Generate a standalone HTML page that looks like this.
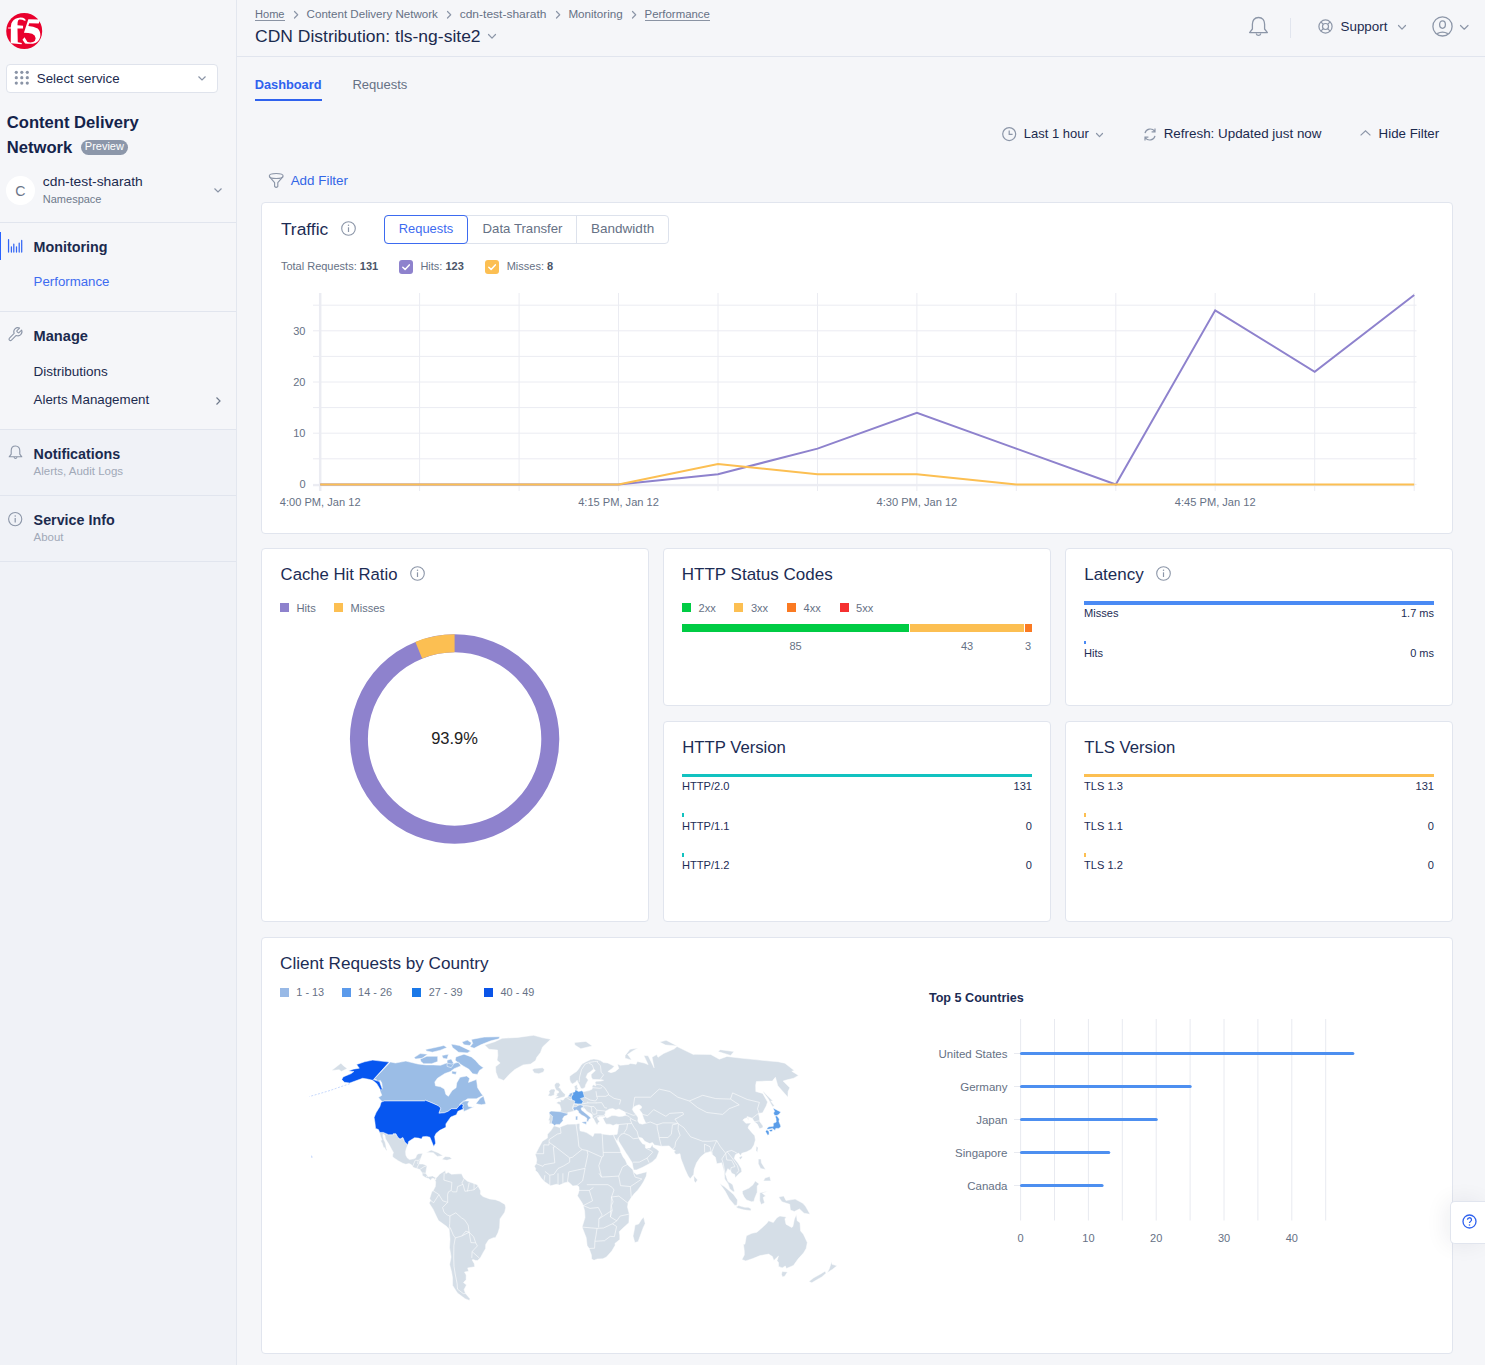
<!DOCTYPE html><html><head><meta charset="utf-8"><style>
html,body{margin:0;padding:0;width:1485px;height:1365px;overflow:hidden;}
body{width:1485px;height:1365px;position:relative;overflow:hidden;background:#f5f6f9;font-family:"Liberation Sans",sans-serif;}
.t{position:absolute;white-space:pre;line-height:1;}
svg{overflow:visible;}
</style></head><body>
<div style="position:absolute;left:0px;top:0px;width:236px;height:429px;background:#f5f6f9"></div>
<div style="position:absolute;left:0px;top:429px;width:236px;height:936px;background:#f0f2f7"></div>
<div style="position:absolute;left:236px;top:0px;width:1px;height:1365px;background:#e3e7ef"></div>
<svg style="position:absolute;left:4px;top:11px;" width="40" height="40" viewBox="0 0 40 40"><circle cx="20.2" cy="20" r="18" fill="#e9002d"/><g transform="scale(0.029304)" fill="#fff"><path d="M140 560 L230 560 L250 430 Q300 280 470 235 Q620 200 720 270 L745 325 L700 335 Q620 285 520 292 Q470 310 465 380 L460 490 L650 500 L650 600 L460 600 L470 1070 L610 1095 L600 1135 L230 1100 L235 600 L140 600 Z"/><path d="M830 285 L1190 290 L1215 345 L1185 430 L860 420 L830 510 Q1000 520 1150 600 Q1250 700 1240 850 Q1220 1000 1090 1080 Q950 1140 720 1110 L630 980 L700 900 L800 1060 Q900 1090 990 1060 Q1080 1020 1080 930 Q1070 830 960 780 Q840 740 680 740 Z"/></g></svg>
<div style="position:absolute;left:6px;top:64px;width:210px;height:27px;background:#fff;border:1px solid #dfe3ec;border-radius:4px"></div>
<svg style="position:absolute;left:15px;top:71px;" width="14" height="14" viewBox="0 0 14 14"><circle cx="1.3" cy="1.3" r="1.6" fill="#8a94a6"/><circle cx="1.3" cy="6.7" r="1.6" fill="#8a94a6"/><circle cx="1.3" cy="12.1" r="1.6" fill="#8a94a6"/><circle cx="6.8" cy="1.3" r="1.6" fill="#8a94a6"/><circle cx="6.8" cy="6.7" r="1.6" fill="#8a94a6"/><circle cx="6.8" cy="12.1" r="1.6" fill="#8a94a6"/><circle cx="12.3" cy="1.3" r="1.6" fill="#8a94a6"/><circle cx="12.3" cy="6.7" r="1.6" fill="#8a94a6"/><circle cx="12.3" cy="12.1" r="1.6" fill="#8a94a6"/></svg>
<svg style="position:absolute;left:198px;top:76px;" width="8" height="5" viewBox="0 0 8 5"><path d="M0.5 0.5 L4 4 L7.5 0.5" fill="none" stroke="#8a94a6" stroke-width="1.2"/></svg>
<div style="position:absolute;left:80.8px;top:139.7px;width:47.2px;height:15.1px;background:#8c97aa;border-radius:8px"></div>
<div style="position:absolute;left:6px;top:176px;width:29px;height:29px;background:#fff;border-radius:50%"></div>
<svg style="position:absolute;left:214px;top:188px;" width="8" height="5" viewBox="0 0 8 5"><path d="M0.5 0.5 L4 4 L7.5 0.5" fill="none" stroke="#8a94a6" stroke-width="1.2"/></svg>
<div style="position:absolute;left:0px;top:222px;width:236px;height:1px;background:#e1e5ee"></div>
<div style="position:absolute;left:0px;top:311px;width:236px;height:1px;background:#e1e5ee"></div>
<div style="position:absolute;left:0px;top:429px;width:236px;height:1px;background:#e1e5ee"></div>
<div style="position:absolute;left:0px;top:495px;width:236px;height:1px;background:#e1e5ee"></div>
<div style="position:absolute;left:0px;top:561px;width:236px;height:1px;background:#e1e5ee"></div>
<div style="position:absolute;left:0px;top:232px;width:1px;height:28px;background:#2962ff"></div>
<svg style="position:absolute;left:0px;top:0px;" width="30" height="260" viewBox="0 0 30 260"><path d="M8.55 239.70 V252.0 M11.40 246.80 V252.0 M13.80 244.00 V252.0 M16.50 246.80 V252.0 M19.20 243.00 V252.0 M21.70 240.40 V252.0" stroke="#3366f5" stroke-width="1.25" stroke-linecap="round" fill="none"/></svg>
<svg style="position:absolute;left:0px;top:0px;" width="30" height="345" viewBox="0 0 30 345"><g transform="translate(7 326.3) scale(0.68)"><path d="M14.7 6.3a1 1 0 0 0 0 1.4l1.6 1.6a1 1 0 0 0 1.4 0l3.77-3.77a6 6 0 0 1-7.94 7.94l-6.91 6.91a2.12 2.12 0 0 1-3-3l6.91-6.91a6 6 0 0 1 7.94-7.94l-3.76 3.76z" fill="none" stroke="#8c96a8" stroke-width="1.6" stroke-linejoin="round"/></g></svg>
<svg style="position:absolute;left:216px;top:397px;" width="5" height="8" viewBox="0 0 5 8"><path d="M0.5 0.5 L4 4 L0.5 7.5" fill="none" stroke="#6f7a8c" stroke-width="1.2"/></svg>
<svg style="position:absolute;left:8px;top:445px;" width="15" height="15" viewBox="0 0 15 15"><path d="M7.5 1 C4.6 1 3.2 3.2 3.2 5.8 V9.2 L1.2 11.8 H13.8 L11.8 9.2 V5.8 C11.8 3.2 10.4 1 7.5 1 Z M6 12.4 a1.6 1.6 0 0 0 3 0" fill="none" stroke="#8c96a8" stroke-width="1.1" stroke-linejoin="round"/></svg>
<svg style="position:absolute;left:8px;top:511.5px;" width="15" height="15" viewBox="0 0 15 15"><circle cx="7.2" cy="7.1" r="6.6" fill="none" stroke="#8c96a8" stroke-width="1.1"/><path d="M7.2 6 V10.5" stroke="#8c96a8" stroke-width="1.2"/><circle cx="7.2" cy="4" r="0.75" fill="#8c96a8"/></svg>
<div style="position:absolute;left:237px;top:56px;width:1248px;height:1px;background:#e1e5ee"></div>
<div style="position:absolute;left:255px;top:20px;width:29.5px;height:1px;background:#8a93a3"></div>
<svg style="position:absolute;left:294px;top:10.5px;" width="4.5" height="7.5" viewBox="0 0 4.5 7.5"><path d="M0.5 0.5 L3.7 3.75 L0.5 7.0" fill="none" stroke="#8c96a8" stroke-width="1.2" stroke-linecap="round" stroke-linejoin="round"/></svg>
<svg style="position:absolute;left:447px;top:10.5px;" width="4.5" height="7.5" viewBox="0 0 4.5 7.5"><path d="M0.5 0.5 L3.7 3.75 L0.5 7.0" fill="none" stroke="#8c96a8" stroke-width="1.2" stroke-linecap="round" stroke-linejoin="round"/></svg>
<svg style="position:absolute;left:555.5px;top:10.5px;" width="4.5" height="7.5" viewBox="0 0 4.5 7.5"><path d="M0.5 0.5 L3.7 3.75 L0.5 7.0" fill="none" stroke="#8c96a8" stroke-width="1.2" stroke-linecap="round" stroke-linejoin="round"/></svg>
<svg style="position:absolute;left:632px;top:10.5px;" width="4.5" height="7.5" viewBox="0 0 4.5 7.5"><path d="M0.5 0.5 L3.7 3.75 L0.5 7.0" fill="none" stroke="#8c96a8" stroke-width="1.2" stroke-linecap="round" stroke-linejoin="round"/></svg>
<div style="position:absolute;left:644.6px;top:20px;width:65.3px;height:1px;background:#8a93a3"></div>
<svg style="position:absolute;left:488px;top:34px;" width="8" height="5" viewBox="0 0 8 5"><path d="M0.5 0.5 L4.0 4.2 L7.5 0.5" fill="none" stroke="#8c96a8" stroke-width="1.2" stroke-linecap="round" stroke-linejoin="round"/></svg>
<svg style="position:absolute;left:1248px;top:16px;" width="21" height="22" viewBox="0 0 21 22"><path d="M10.5 1.5 C6.4 1.5 4.4 4.6 4.4 8.2 V13 L1.6 16.6 H19.4 L16.6 13 V8.2 C16.6 4.6 14.6 1.5 10.5 1.5 Z M8.2 17.6 a2.4 2.4 0 0 0 4.6 0" fill="none" stroke="#8c96a8" stroke-width="1.3" stroke-linejoin="round"/></svg>
<div style="position:absolute;left:1290px;top:18px;width:1px;height:20px;background:#e1e5ee"></div>
<svg style="position:absolute;left:1318px;top:19px;" width="15" height="15" viewBox="0 0 15 15"><circle cx="7.5" cy="7.5" r="6.6" fill="none" stroke="#8c96a8" stroke-width="1.2"/><circle cx="7.5" cy="7.5" r="3" fill="none" stroke="#8c96a8" stroke-width="1.2"/><path d="M2.8 2.8 L5.4 5.4 M12.2 2.8 L9.6 5.4 M2.8 12.2 L5.4 9.6 M12.2 12.2 L9.6 9.6" stroke="#8c96a8" stroke-width="1.2"/></svg>
<svg style="position:absolute;left:1398px;top:25px;" width="8" height="5" viewBox="0 0 8 5"><path d="M0.5 0.5 L4.0 4.2 L7.5 0.5" fill="none" stroke="#8c96a8" stroke-width="1.2" stroke-linecap="round" stroke-linejoin="round"/></svg>
<svg style="position:absolute;left:1432px;top:16px;" width="21" height="21" viewBox="0 0 21 21"><circle cx="10.5" cy="10.4" r="9.6" fill="none" stroke="#8c96a8" stroke-width="1.3"/><ellipse cx="10.5" cy="8.6" rx="2.9" ry="3.7" fill="none" stroke="#8c96a8" stroke-width="1.3"/><path d="M5.2 17.6 Q10.5 14.6 15.8 17.6" fill="none" stroke="#8c96a8" stroke-width="1.3"/></svg>
<svg style="position:absolute;left:1460px;top:25px;" width="8.5" height="5" viewBox="0 0 8.5 5"><path d="M0.5 0.5 L4.25 4.2 L8.0 0.5" fill="none" stroke="#8c96a8" stroke-width="1.2" stroke-linecap="round" stroke-linejoin="round"/></svg>
<div style="position:absolute;left:255px;top:99px;width:67px;height:2px;background:#2f62ee"></div>
<svg style="position:absolute;left:1001.5px;top:126.5px;" width="15" height="15" viewBox="0 0 15 15"><circle cx="7.2" cy="7.1" r="6.5" fill="none" stroke="#8c96a8" stroke-width="1.2"/><path d="M7.2 3.4 V7.3 H10.6" fill="none" stroke="#8c96a8" stroke-width="1.2"/></svg>
<svg style="position:absolute;left:1096px;top:133px;" width="7" height="4.5" viewBox="0 0 7 4.5"><path d="M0.5 0.5 L3.5 3.7 L6.5 0.5" fill="none" stroke="#8c96a8" stroke-width="1.2" stroke-linecap="round" stroke-linejoin="round"/></svg>
<svg style="position:absolute;left:1142.5px;top:126.5px;" width="14" height="15" viewBox="0 0 14 15"><path d="M2 6.2 A5.4 5.4 0 0 1 11.6 4.2 M12 1.4 V4.8 H8.6 M12 8.8 A5.4 5.4 0 0 1 2.4 10.8 M2 13.6 V10.2 H5.4" fill="none" stroke="#8c96a8" stroke-width="1.2"/></svg>
<svg style="position:absolute;left:1360px;top:129.5px;" width="11" height="6" viewBox="0 0 11 6"><path d="M0.6 5.4 L5.5 0.8 L10.4 5.4" fill="none" stroke="#8c96a8" stroke-width="1.2"/></svg>
<svg style="position:absolute;left:0px;top:0px;" width="300" height="200" viewBox="0 0 300 200"><ellipse cx="276.2" cy="176" rx="6.9" ry="2.5" fill="none" stroke="#8c96a8" stroke-width="1.15"/><path d="M269.4 176.6 L274.6 182.6 V186.4 Q276.2 188.4 277.8 186.4 V182.6 L283 176.6" fill="none" stroke="#8c96a8" stroke-width="1.15" stroke-linejoin="round"/></svg>
<div style="position:absolute;left:261px;top:202px;width:1190px;height:330px;background:#fff;border:1px solid #e1e5ee;border-radius:4px"></div>
<svg style="position:absolute;left:340.5px;top:221.0px;" width="15" height="15" viewBox="0 0 15 15"><circle cx="7.5" cy="7.5" r="6.8" fill="none" stroke="#8c96a8" stroke-width="1.1"/><path d="M7.5 6.3 V11" stroke="#8c96a8" stroke-width="1.2"/><circle cx="7.5" cy="4.2" r="0.75" fill="#8c96a8"/></svg>
<div style="position:absolute;left:384px;top:215px;width:283px;height:27px;background:#fff;border:1px solid #dde2ec;border-radius:4px"></div>
<div style="position:absolute;left:576px;top:216px;width:1px;height:27px;background:#dde2ec"></div>
<div style="position:absolute;left:384px;top:215px;width:82px;height:27px;border:1px solid #3d6bf0;border-radius:4px"></div>
<svg style="position:absolute;left:399px;top:260px;" width="14" height="14" viewBox="0 0 14 14"><rect x="0" y="0" width="14" height="14" rx="3" fill="#8e82cd"/><path d="M3.8 7.2 L6.1 9.4 L10.3 4.9" fill="none" stroke="#fff" stroke-width="1.5" stroke-linecap="round" stroke-linejoin="round"/></svg>
<svg style="position:absolute;left:485px;top:260px;" width="14" height="14" viewBox="0 0 14 14"><rect x="0" y="0" width="14" height="14" rx="3" fill="#fcbf52"/><path d="M3.8 7.2 L6.1 9.4 L10.3 4.9" fill="none" stroke="#fff" stroke-width="1.5" stroke-linecap="round" stroke-linejoin="round"/></svg>
<svg style="position:absolute;left:0px;top:0px;" width="1485" height="1365" viewBox="0 0 1485 1365"><path d="M313 484.4 H1416.5" stroke="#ebecf2" stroke-width="1"/><path d="M313 458.8 H1416.5" stroke="#ebecf2" stroke-width="1"/><path d="M313 433.2 H1416.5" stroke="#ebecf2" stroke-width="1"/><path d="M313 407.6 H1416.5" stroke="#ebecf2" stroke-width="1"/><path d="M313 382.0 H1416.5" stroke="#ebecf2" stroke-width="1"/><path d="M313 356.4 H1416.5" stroke="#ebecf2" stroke-width="1"/><path d="M313 330.8 H1416.5" stroke="#ebecf2" stroke-width="1"/><path d="M313 305.2 H1416.5" stroke="#ebecf2" stroke-width="1"/><path d="M419.6 293 V491" stroke="#ebecf2" stroke-width="1"/><path d="M519.1 293 V491" stroke="#ebecf2" stroke-width="1"/><path d="M618.5 293 V491" stroke="#ebecf2" stroke-width="1"/><path d="M718.0 293 V491" stroke="#ebecf2" stroke-width="1"/><path d="M817.5 293 V491" stroke="#ebecf2" stroke-width="1"/><path d="M916.9 293 V491" stroke="#ebecf2" stroke-width="1"/><path d="M1016.3 293 V491" stroke="#ebecf2" stroke-width="1"/><path d="M1115.8 293 V491" stroke="#ebecf2" stroke-width="1"/><path d="M1215.2 293 V491" stroke="#ebecf2" stroke-width="1"/><path d="M1314.7 293 V491" stroke="#ebecf2" stroke-width="1"/><path d="M1414.2 293 V491" stroke="#ebecf2" stroke-width="1"/><path d="M320.2 293 V491" stroke="#ebecf2" stroke-width="2.5"/><path d="M313 485.5 H1414.5" stroke="#ebecf2" stroke-width="1.5"/><polyline points="320.2,484.4 419.6,484.4 519.1,484.4 618.5,484.4 718.0,474.2 817.5,448.6 916.9,412.7 1016.3,448.6 1115.8,484.4 1215.2,310.3 1314.7,371.8 1414.2,295.0" fill="none" stroke="#8e82cd" stroke-width="2" stroke-linejoin="miter"/><polyline points="320.2,484.4 419.6,484.4 519.1,484.4 618.5,484.4 718.0,463.9 817.5,474.2 916.9,474.2 1016.3,484.4 1115.8,484.4 1215.2,484.4 1314.7,484.4 1414.2,484.4" fill="none" stroke="#fcbf52" stroke-width="2"/></svg>
<div style="position:absolute;left:261px;top:548px;width:386px;height:372px;background:#fff;border:1px solid #e1e5ee;border-radius:4px"></div>
<svg style="position:absolute;left:410.0px;top:566.0px;" width="15" height="15" viewBox="0 0 15 15"><circle cx="7.5" cy="7.5" r="6.8" fill="none" stroke="#8c96a8" stroke-width="1.1"/><path d="M7.5 6.3 V11" stroke="#8c96a8" stroke-width="1.2"/><circle cx="7.5" cy="4.2" r="0.75" fill="#8c96a8"/></svg>
<div style="position:absolute;left:280px;top:603px;width:9px;height:9px;background:#8e82cd"></div>
<div style="position:absolute;left:334px;top:603px;width:9px;height:9px;background:#fcbf52"></div>
<svg style="position:absolute;left:0px;top:0px;" width="1485" height="1365" viewBox="0 0 1485 1365"><circle cx="454.6" cy="739" r="95.7" fill="none" stroke="#8e82cd" stroke-width="18.0"/><path d="M454.6 643.3 A95.7 95.7 0 0 0 418.77 650.26" fill="none" stroke="#fcbf52" stroke-width="18.0"/></svg>
<div style="position:absolute;left:663px;top:548px;width:386px;height:156px;background:#fff;border:1px solid #e1e5ee;border-radius:4px"></div>
<div style="position:absolute;left:681.8px;top:603px;width:9px;height:9px;background:#00cc44"></div>
<div style="position:absolute;left:734.2px;top:603px;width:9px;height:9px;background:#fcbf52"></div>
<div style="position:absolute;left:787px;top:603px;width:9px;height:9px;background:#fa7a22"></div>
<div style="position:absolute;left:840px;top:603px;width:9px;height:9px;background:#f53030"></div>
<div style="position:absolute;left:682px;top:624px;width:227px;height:8px;background:#00cc44"></div>
<div style="position:absolute;left:910px;top:624px;width:114px;height:8px;background:#fcbf52"></div>
<div style="position:absolute;left:1025px;top:624px;width:7px;height:8px;background:#fa7a22"></div>
<div style="position:absolute;left:1065px;top:548px;width:386px;height:156px;background:#fff;border:1px solid #e1e5ee;border-radius:4px"></div>
<svg style="position:absolute;left:1156.0px;top:565.7px;" width="15" height="15" viewBox="0 0 15 15"><circle cx="7.5" cy="7.5" r="6.8" fill="none" stroke="#8c96a8" stroke-width="1.1"/><path d="M7.5 6.3 V11" stroke="#8c96a8" stroke-width="1.2"/><circle cx="7.5" cy="4.2" r="0.75" fill="#8c96a8"/></svg>
<div style="position:absolute;left:1084px;top:601px;width:350px;height:4px;background:#4a8af4"></div>
<div style="position:absolute;left:1084px;top:641px;width:2px;height:2.5px;background:#4a8af4"></div>
<div style="position:absolute;left:663px;top:721px;width:386px;height:199px;background:#fff;border:1px solid #e1e5ee;border-radius:4px"></div>
<div style="position:absolute;left:682px;top:774px;width:350px;height:3px;background:#12c2c0"></div>
<div style="position:absolute;left:682px;top:813px;width:2.4px;height:4px;background:#12c2c0"></div>
<div style="position:absolute;left:682px;top:853px;width:2.4px;height:4px;background:#12c2c0"></div>
<div style="position:absolute;left:1065px;top:721px;width:386px;height:199px;background:#fff;border:1px solid #e1e5ee;border-radius:4px"></div>
<div style="position:absolute;left:1084px;top:774px;width:350px;height:3px;background:#fcbf52"></div>
<div style="position:absolute;left:1084px;top:813px;width:2.4px;height:4px;background:#fcbf52"></div>
<div style="position:absolute;left:1084px;top:853px;width:2.4px;height:4px;background:#fcbf52"></div>
<div style="position:absolute;left:261px;top:937px;width:1190px;height:415px;background:#fff;border:1px solid #e1e5ee;border-radius:4px"></div>
<div style="position:absolute;left:280px;top:987.5px;width:9px;height:9px;background:#98b9e6"></div>
<div style="position:absolute;left:342.3px;top:987.5px;width:9px;height:9px;background:#5b9aeb"></div>
<div style="position:absolute;left:412.4px;top:987.5px;width:9px;height:9px;background:#1a78e8"></div>
<div style="position:absolute;left:484.2px;top:987.5px;width:9px;height:9px;background:#0a54e8"></div>
<svg style="position:absolute;left:0px;top:0px;" width="1485" height="1365" viewBox="0 0 1485 1365"><path d="M1020.6 1019 V1220.5" stroke="#e8eaf0" stroke-width="1"/><path d="M1054.5 1019 V1220.5" stroke="#e8eaf0" stroke-width="1"/><path d="M1088.4 1019 V1220.5" stroke="#e8eaf0" stroke-width="1"/><path d="M1122.3 1019 V1220.5" stroke="#e8eaf0" stroke-width="1"/><path d="M1156.2 1019 V1220.5" stroke="#e8eaf0" stroke-width="1"/><path d="M1190.1 1019 V1220.5" stroke="#e8eaf0" stroke-width="1"/><path d="M1224.0 1019 V1220.5" stroke="#e8eaf0" stroke-width="1"/><path d="M1257.9 1019 V1220.5" stroke="#e8eaf0" stroke-width="1"/><path d="M1291.8 1019 V1220.5" stroke="#e8eaf0" stroke-width="1"/><path d="M1325.7 1019 V1220.5" stroke="#e8eaf0" stroke-width="1"/><path d="M1014 1053.5 H1020.6" stroke="#e8eaf0" stroke-width="1"/><path d="M1021.6 1053.5 H1352.8" stroke="#4d8ff0" stroke-width="3.2" stroke-linecap="round"/><path d="M1014 1086.5 H1020.6" stroke="#e8eaf0" stroke-width="1"/><path d="M1021.6 1086.5 H1190.1" stroke="#4d8ff0" stroke-width="3.2" stroke-linecap="round"/><path d="M1014 1119.5 H1020.6" stroke="#e8eaf0" stroke-width="1"/><path d="M1021.6 1119.5 H1156.2" stroke="#4d8ff0" stroke-width="3.2" stroke-linecap="round"/><path d="M1014 1152.5 H1020.6" stroke="#e8eaf0" stroke-width="1"/><path d="M1021.6 1152.5 H1108.7" stroke="#4d8ff0" stroke-width="3.2" stroke-linecap="round"/><path d="M1014 1185.5 H1020.6" stroke="#e8eaf0" stroke-width="1"/><path d="M1021.6 1185.5 H1102.0" stroke="#4d8ff0" stroke-width="3.2" stroke-linecap="round"/></svg>
<svg style="position:absolute;left:0px;top:0px;" width="1485" height="1365" viewBox="0 0 1485 1365"><path d="M484.6 1045.0 L494.8 1041.7 L502.2 1038.3 L517.8 1037.4 L533.6 1035.3 L542.8 1037.8 L550.7 1039.3 L542.6 1046.9 L540.5 1052.6 L536.8 1057.3 L535.6 1060.6 L530.7 1064.0 L523.1 1064.9 L514.9 1069.5 L509.2 1074.4 L503.8 1080.5 L498.2 1078.2 L495.9 1072.2 L495.5 1066.8 L500.1 1063.0 L497.0 1060.2 L497.8 1055.4 L497.5 1050.1 L489.0 1049.3ZM534.3 1068.4 L542.7 1067.8 L544.4 1069.7 L543.5 1072.0 L538.8 1073.7 L534.3 1072.9 L532.2 1069.7ZM379.7 1132.4 L383.3 1132.4 L388.5 1134.7 L392.9 1134.7 L393.2 1133.7 L395.9 1133.7 L397.8 1137.2 L400.0 1139.1 L402.9 1137.5 L404.8 1141.9 L407.8 1145.0 L406.3 1148.6 L405.6 1151.4 L405.9 1155.2 L407.4 1158.1 L409.6 1159.6 L413.8 1158.8 L415.5 1158.1 L417.0 1154.6 L418.6 1153.7 L422.7 1153.3 L421.3 1157.1 L419.7 1160.9 L419.2 1164.0 L422.9 1164.0 L427.1 1165.7 L426.3 1169.5 L425.8 1173.3 L428.0 1176.7 L432.5 1175.9 L435.8 1177.8 L434.9 1180.5 L434.2 1178.6 L431.9 1178.4 L430.6 1180.3 L428.7 1178.6 L425.7 1177.8 L422.4 1175.4 L422.2 1172.9 L419.7 1169.5 L416.7 1168.5 L413.5 1167.6 L411.4 1164.7 L409.1 1163.6 L405.8 1164.3 L402.6 1163.2 L398.1 1160.7 L392.7 1157.1 L392.6 1155.0 L393.4 1152.4 L392.0 1150.1 L390.0 1146.3 L388.5 1143.6 L386.8 1141.0 L385.4 1138.5 L384.9 1135.3 L383.0 1133.9 L382.9 1136.2 L383.9 1140.0 L385.0 1141.9 L385.8 1145.1 L386.2 1148.2 L387.1 1150.1 L386.3 1150.7 L384.4 1147.6 L383.5 1147.4 L382.2 1143.2 L381.3 1141.9 L380.6 1140.4 L382.0 1140.0 L380.6 1136.6 L379.9 1133.7ZM426.0 1152.7 L431.2 1150.1 L438.1 1152.7 L443.0 1155.8 L437.3 1156.4 L433.2 1152.7 L427.6 1152.6ZM442.1 1159.2 L445.2 1156.4 L449.7 1156.9 L452.0 1158.8 L446.9 1160.3 L442.4 1159.6ZM434.9 1180.5 L436.0 1178.0 L437.9 1176.3 L439.2 1174.4 L441.4 1172.9 L445.3 1170.6 L445.8 1173.5 L448.3 1172.3 L451.5 1174.2 L454.7 1174.0 L458.9 1173.8 L461.6 1173.8 L463.6 1178.0 L467.6 1181.3 L472.5 1183.0 L477.3 1184.7 L480.6 1190.8 L480.5 1194.2 L483.0 1196.5 L489.6 1198.9 L495.4 1199.7 L499.5 1201.2 L505.0 1204.4 L505.7 1207.7 L504.7 1212.2 L500.0 1218.9 L499.6 1227.4 L498.0 1232.8 L495.4 1237.7 L493.5 1237.7 L488.7 1239.8 L485.7 1244.5 L485.6 1248.5 L483.4 1252.2 L480.3 1257.9 L477.6 1260.5 L475.7 1260.5 L472.9 1259.4 L472.2 1259.9 L474.2 1263.6 L474.8 1266.8 L467.7 1267.9 L468.6 1271.3 L464.5 1272.1 L466.2 1275.0 L466.1 1279.7 L463.5 1282.6 L466.5 1285.0 L464.1 1289.6 L465.5 1293.6 L470.0 1298.7 L469.4 1300.4 L465.1 1298.7 L457.4 1293.0 L452.6 1285.4 L452.5 1277.8 L451.6 1272.1 L449.6 1264.5 L451.1 1256.9 L449.5 1247.4 L450.0 1239.0 L449.1 1229.2 L446.7 1226.5 L438.5 1220.6 L436.7 1217.0 L433.2 1209.4 L429.1 1203.1 L430.7 1200.6 L429.7 1198.4 L431.0 1194.2 L432.0 1191.3 L433.1 1190.8 L435.3 1186.6 L435.7 1181.8ZM553.8 1126.1 L551.1 1130.3 L547.5 1134.3 L547.4 1138.1 L542.4 1141.2 L538.9 1147.6 L535.3 1154.6 L536.2 1157.3 L536.8 1160.0 L536.1 1163.8 L534.4 1166.2 L535.6 1168.5 L535.4 1170.6 L537.5 1172.3 L541.2 1178.0 L544.0 1181.3 L550.6 1185.8 L556.3 1184.3 L559.6 1185.1 L564.6 1182.8 L568.5 1182.0 L572.8 1186.0 L576.9 1185.6 L578.9 1186.8 L579.1 1190.4 L578.2 1193.8 L577.4 1195.7 L582.3 1203.3 L583.2 1205.6 L584.6 1210.9 L585.0 1217.6 L582.1 1227.1 L586.2 1237.7 L587.1 1245.5 L589.1 1248.5 L591.4 1255.0 L591.6 1259.0 L594.0 1260.3 L597.3 1259.0 L602.8 1258.8 L606.5 1256.9 L611.8 1251.0 L615.3 1245.1 L614.9 1243.4 L619.8 1239.6 L619.8 1235.0 L619.2 1231.8 L622.8 1228.2 L628.9 1222.7 L629.3 1214.1 L627.5 1207.1 L628.3 1202.0 L631.3 1197.6 L634.6 1193.2 L637.5 1190.4 L641.1 1185.6 L643.5 1181.8 L646.3 1176.1 L646.9 1171.8 L642.4 1172.9 L636.7 1174.4 L633.5 1172.1 L632.7 1169.5 L627.3 1164.5 L625.4 1160.0 L623.1 1156.9 L620.9 1152.4 L619.8 1148.6 L616.7 1142.5 L614.4 1137.4 L613.7 1134.7 L609.9 1134.9 L602.5 1134.1 L600.5 1133.2 L594.4 1133.2 L592.9 1136.6 L586.6 1132.6 L583.5 1131.6 L580.2 1130.9 L579.7 1128.2 L579.8 1123.7 L578.6 1123.5 L576.3 1124.0 L567.5 1124.2 L562.0 1126.3 L559.5 1127.5 L554.7 1125.9ZM643.6 1217.0 L645.2 1223.6 L643.3 1227.4 L640.2 1236.0 L638.1 1241.7 L634.8 1242.6 L633.0 1236.0 L634.2 1230.3 L635.0 1225.0 L638.7 1224.0 L641.3 1219.8ZM554.7 1099.0 L557.9 1098.6 L564.9 1096.7 L565.3 1094.2 L563.3 1092.7 L561.5 1090.6 L560.1 1088.1 L558.8 1087.7 L560.4 1084.9 L558.8 1082.8 L556.1 1082.8 L554.4 1084.9 L555.1 1087.7 L556.1 1090.0 L558.4 1091.2 L558.7 1092.7 L556.3 1093.8 L557.2 1095.0 L555.3 1095.9 L558.3 1096.5 L556.5 1097.2ZM554.4 1095.0 L554.3 1092.9 L555.2 1090.6 L554.3 1089.1 L551.1 1089.3 L548.9 1091.2 L549.5 1093.1 L547.9 1095.7 L550.8 1096.3ZM340.9 1063.2 L343.7 1065.9 L347.2 1068.5 L341.4 1071.6 L339.1 1069.7 L331.5 1070.6ZM756.3 1146.3 L758.1 1147.6 L757.4 1152.4 L756.0 1150.5ZM738.9 1157.7 L741.5 1156.0 L742.5 1157.1 L740.5 1159.6ZM693.8 1175.6 L697.5 1179.9 L695.5 1183.0 L694.1 1180.9ZM758.3 1159.0 L761.0 1159.0 L761.4 1162.8 L765.6 1169.5 L760.6 1168.5 L758.3 1163.8ZM763.5 1180.9 L770.9 1180.9 L769.7 1176.5 L764.9 1178.0ZM719.7 1183.5 L724.3 1186.6 L733.4 1194.2 L737.5 1199.9 L737.0 1205.2 L734.8 1205.4 L729.3 1198.9 L725.2 1191.3ZM735.9 1207.1 L738.6 1205.6 L744.6 1207.3 L748.2 1207.3 L751.2 1208.8 L750.7 1210.7 L743.6 1209.8 L737.9 1208.2ZM742.3 1191.3 L743.5 1190.4 L749.0 1188.1 L753.0 1184.7 L755.2 1180.9 L759.2 1183.9 L757.2 1186.0 L757.2 1192.3 L754.8 1198.0 L753.9 1201.4 L751.4 1201.8 L746.5 1199.9 L744.1 1197.0 L742.5 1193.6ZM759.8 1192.7 L768.0 1191.3 L762.3 1193.2 L765.6 1195.9 L763.1 1197.6 L764.6 1202.7 L761.2 1204.6 L759.7 1200.8ZM778.7 1197.0 L783.7 1195.9 L786.0 1200.5 L795.1 1199.1 L802.9 1203.3 L805.5 1206.2 L810.1 1214.3 L804.0 1213.2 L799.5 1209.0 L794.3 1211.5 L790.4 1210.1 L789.7 1204.3 L781.9 1201.8 L780.3 1199.5ZM746.4 1235.8 L744.9 1244.2 L743.4 1244.0 L744.3 1251.2 L744.3 1255.0 L741.9 1259.6 L745.7 1260.9 L752.8 1258.6 L760.2 1255.6 L768.6 1254.1 L772.4 1256.5 L773.8 1260.5 L778.5 1256.1 L777.0 1260.7 L778.5 1262.6 L778.5 1266.4 L782.2 1267.9 L785.3 1266.0 L786.4 1268.5 L793.4 1265.5 L798.4 1258.6 L803.5 1253.1 L806.2 1248.5 L807.3 1242.6 L805.2 1237.9 L803.3 1234.1 L800.6 1230.9 L800.0 1222.7 L797.2 1220.8 L796.4 1214.5 L794.4 1218.9 L792.9 1226.5 L791.6 1227.4 L786.0 1224.2 L784.9 1218.9 L786.3 1217.0 L779.9 1216.0 L776.9 1217.7 L773.3 1222.5 L768.6 1220.8 L766.6 1223.6 L761.2 1228.4 L756.9 1232.2 L751.9 1233.3ZM782.1 1271.5 L787.5 1271.9 L784.7 1276.3 L782.5 1277.0 L781.5 1274.4ZM831.4 1259.6 L832.1 1264.3 L837.0 1265.8 L832.6 1269.3 L827.2 1272.7 L829.2 1268.9 L831.6 1261.7ZM825.0 1271.2 L826.1 1273.2 L821.8 1276.9 L816.9 1279.7 L811.8 1282.8 L808.9 1281.6 L813.7 1277.8 L820.6 1274.0ZM625.1 1058.3 L631.8 1060.0 L627.6 1054.5 L633.1 1050.7 L638.3 1048.0 L630.0 1049.2 L625.1 1055.4ZM665.5 1045.0 L677.2 1045.9 L666.1 1040.2 L659.7 1042.1ZM574.8 1045.0 L580.8 1048.8 L592.3 1045.9 L585.9 1041.4 L574.5 1042.5ZM718.0 1051.6 L730.6 1055.4 L734.0 1051.6 L720.2 1049.7ZM772.7 1106.7 L774.4 1105.8 L770.7 1101.0 L772.9 1101.0 L766.9 1095.3 L763.1 1091.0 L763.5 1092.5 L768.3 1099.1 L771.4 1104.8Z" fill="#d5dee7" stroke="#fff" stroke-width="0.5"/><path d="M554.3 1125.8 L553.2 1124.2 L551.5 1123.5 L549.2 1123.9 L549.5 1120.6 L548.4 1120.4 L549.4 1117.2 L549.7 1114.4 L549.0 1112.5 L551.0 1111.1 L554.2 1111.3 L560.2 1111.7 L561.1 1109.2 L559.7 1104.7 L556.1 1102.9 L558.6 1101.4 L560.6 1101.8 L560.2 1099.7 L563.2 1100.1 L565.2 1097.4 L567.5 1096.7 L569.3 1094.8 L569.7 1093.4 L572.7 1092.5 L575.0 1091.7 L574.9 1088.7 L574.2 1086.2 L577.3 1084.5 L577.2 1087.2 L578.1 1088.5 L576.9 1090.4 L578.4 1091.5 L581.9 1090.8 L583.1 1091.7 L589.0 1090.6 L592.2 1089.1 L592.1 1086.8 L593.1 1084.7 L596.0 1085.8 L595.0 1082.2 L596.4 1081.3 L600.7 1081.1 L603.6 1080.3 L601.9 1079.8 L596.5 1079.6 L592.8 1079.4 L591.3 1077.3 L591.1 1074.4 L595.4 1070.6 L593.7 1069.1 L590.7 1071.6 L587.7 1073.5 L586.0 1077.3 L588.3 1080.0 L587.4 1081.5 L585.6 1084.9 L585.1 1087.4 L582.8 1088.7 L580.9 1088.5 L579.2 1084.5 L577.8 1082.0 L577.1 1080.3 L575.8 1082.0 L572.5 1083.9 L570.5 1082.2 L569.6 1079.2 L569.7 1076.3 L573.4 1073.5 L576.5 1071.6 L578.8 1068.7 L581.0 1065.3 L582.7 1063.6 L586.0 1061.7 L590.7 1059.6 L593.9 1059.0 L597.3 1059.4 L600.5 1060.6 L603.4 1062.5 L607.9 1063.0 L614.4 1066.3 L611.9 1068.7 L607.9 1071.6 L611.0 1072.7 L615.2 1071.4 L618.8 1068.4 L617.4 1064.0 L620.4 1065.3 L628.7 1064.4 L630.2 1063.4 L636.1 1064.2 L637.3 1061.5 L644.2 1063.0 L648.1 1064.6 L643.8 1055.4 L648.2 1055.8 L654.1 1067.8 L652.0 1057.3 L656.7 1054.5 L658.0 1057.3 L663.6 1053.5 L674.4 1048.8 L677.0 1046.5 L693.4 1054.5 L694.9 1054.3 L710.8 1054.5 L719.3 1059.2 L727.0 1056.4 L742.3 1058.3 L755.5 1059.6 L769.9 1061.1 L778.0 1061.7 L784.9 1063.2 L794.3 1070.6 L791.8 1071.2 L798.5 1075.4 L793.7 1078.2 L786.2 1080.1 L783.1 1081.1 L789.8 1087.7 L788.1 1091.5 L787.9 1097.2 L777.8 1085.8 L775.4 1077.3 L772.3 1081.1 L766.2 1081.1 L756.4 1081.5 L755.7 1084.9 L755.8 1091.5 L762.7 1093.4 L767.6 1102.0 L766.3 1105.8 L762.6 1112.8 L758.4 1113.4 L759.4 1117.2 L759.7 1121.4 L762.9 1125.8 L763.0 1127.5 L759.6 1128.8 L757.2 1123.9 L754.6 1122.0 L752.2 1118.2 L747.0 1116.6 L748.2 1120.4 L748.5 1117.2 L744.8 1118.5 L742.8 1120.1 L745.9 1123.3 L751.2 1123.1 L748.8 1125.8 L748.0 1128.0 L752.6 1133.4 L754.7 1135.4 L755.4 1140.0 L754.0 1145.1 L751.4 1149.3 L746.7 1151.8 L741.8 1153.3 L740.7 1155.6 L738.6 1153.1 L735.4 1154.8 L734.2 1158.4 L737.8 1162.8 L741.3 1168.5 L741.8 1171.8 L738.3 1174.4 L735.3 1177.8 L734.7 1174.6 L731.7 1173.3 L730.6 1170.8 L727.8 1168.7 L725.5 1174.2 L727.8 1180.9 L732.7 1184.7 L734.6 1191.5 L733.3 1191.7 L729.8 1188.9 L728.1 1183.9 L724.7 1179.0 L724.1 1171.4 L721.7 1162.8 L716.8 1163.8 L715.4 1157.3 L711.9 1154.3 L710.6 1151.4 L707.8 1152.4 L705.5 1152.9 L703.4 1154.6 L700.5 1157.1 L696.6 1162.8 L694.2 1169.3 L693.7 1174.6 L690.2 1178.8 L688.1 1176.1 L685.2 1169.7 L681.4 1160.0 L680.8 1158.1 L680.0 1153.7 L675.9 1154.5 L673.8 1151.8 L675.4 1150.7 L672.9 1149.5 L670.1 1147.0 L669.2 1145.9 L661.4 1146.3 L654.4 1145.1 L652.4 1142.5 L649.7 1143.6 L644.7 1141.2 L642.2 1138.1 L638.6 1137.2 L639.8 1140.0 L642.6 1143.8 L645.2 1144.6 L645.6 1148.0 L650.2 1148.0 L652.5 1144.2 L653.1 1146.9 L656.8 1149.3 L659.1 1151.4 L656.5 1158.1 L652.3 1161.9 L647.9 1164.5 L642.1 1167.6 L636.5 1169.9 L633.7 1170.0 L632.7 1166.1 L632.2 1162.8 L627.5 1155.2 L626.1 1153.3 L622.1 1146.7 L618.5 1141.0 L618.1 1138.1 L617.4 1141.5 L614.4 1137.4 L613.7 1134.7 L617.1 1134.3 L617.6 1131.8 L618.4 1126.7 L618.7 1124.6 L616.2 1124.2 L613.1 1125.6 L610.1 1124.2 L606.1 1124.2 L604.8 1122.1 L603.3 1119.1 L602.8 1118.2 L606.8 1116.3 L605.3 1116.3 L602.3 1116.6 L599.3 1116.6 L597.9 1117.8 L597.2 1117.2 L598.0 1119.5 L599.7 1121.6 L598.0 1122.9 L597.6 1125.0 L596.4 1124.2 L595.3 1122.3 L593.7 1119.1 L592.4 1117.6 L592.3 1114.7 L590.7 1113.6 L586.9 1111.5 L584.4 1108.3 L583.3 1109.0 L583.3 1107.3 L581.1 1107.9 L581.6 1110.2 L583.3 1111.5 L587.0 1114.5 L591.0 1118.0 L589.0 1119.3 L588.3 1121.2 L586.8 1122.0 L586.9 1118.2 L584.6 1116.6 L581.6 1114.9 L578.7 1112.6 L578.2 1110.7 L576.2 1109.8 L574.1 1110.9 L571.0 1111.9 L567.7 1112.5 L567.7 1114.5 L566.2 1115.5 L564.1 1116.3 L562.5 1119.1 L563.2 1120.6 L562.2 1121.4 L559.7 1124.4 L556.1 1124.4ZM604.9 1115.4 L605.6 1111.2 L609.5 1109.0 L612.8 1108.6 L615.8 1110.0 L618.9 1109.0 L622.5 1110.8 L625.2 1112.6 L625.9 1115.2 L622.5 1116.2 L618.9 1116.4 L615.0 1115.6 L611.9 1115.6 L609.0 1117.0 L606.8 1118.0ZM632.4 1109.6 L633.2 1107.5 L635.5 1106.0 L639.1 1104.7 L641.4 1106.2 L641.5 1108.1 L639.3 1109.6 L642.2 1113.4 L642.8 1115.9 L643.5 1118.2 L645.8 1123.3 L642.3 1124.2 L639.2 1123.3 L637.8 1121.0 L638.1 1117.8 L636.2 1114.7 L634.2 1112.5Z" fill="#d5dee7" fill-rule="evenodd" stroke="#fff" stroke-width="0.5"/><path d="M390.4 1061.9 L395.4 1063.0 L405.8 1061.1 L410.9 1062.3 L418.0 1064.0 L425.9 1064.9 L433.3 1064.9 L440.6 1065.3 L446.5 1063.0 L451.4 1064.0 L458.8 1062.1 L460.8 1065.9 L454.1 1068.7 L450.5 1071.6 L444.9 1073.5 L437.5 1078.2 L434.8 1082.0 L435.5 1085.8 L440.5 1086.8 L444.4 1089.1 L445.9 1094.4 L448.4 1096.3 L452.1 1090.6 L456.1 1087.7 L456.7 1083.0 L460.0 1077.3 L466.6 1076.0 L469.6 1078.2 L468.5 1082.4 L475.6 1079.8 L476.5 1079.6 L477.6 1087.7 L481.9 1094.4 L483.3 1095.3 L476.4 1098.8 L467.7 1098.8 L459.4 1104.5 L463.4 1101.0 L469.2 1101.0 L467.7 1103.9 L468.5 1106.4 L472.7 1107.1 L474.7 1106.4 L468.4 1109.4 L463.9 1111.5 L463.3 1109.0 L462.6 1107.3 L463.3 1104.8 L461.5 1104.1 L459.0 1105.8 L456.7 1108.7 L451.5 1108.7 L448.1 1111.3 L444.3 1112.8 L438.9 1113.2 L440.7 1108.1 L438.4 1105.8 L432.0 1102.9 L425.5 1100.3 L424.6 1101.0 L384.2 1101.0 L382.8 1102.4 L378.4 1097.6 L381.8 1095.3 L379.9 1090.6 L382.4 1087.9 L381.8 1083.0 L380.3 1080.5 L376.4 1082.0 L376.4 1079.6 L373.7 1079.6ZM485.8 1103.9 L483.5 1096.1 L480.1 1098.2 L475.9 1103.7 L481.4 1104.8ZM471.4 1039.4 L484.2 1037.1 L499.7 1036.7 L499.0 1038.8 L490.9 1040.8 L480.8 1044.8 L474.1 1048.2 L470.0 1046.8 L472.7 1043.5ZM462.0 1042.1 L467.3 1040.1 L471.4 1042.8 L470.0 1045.5 L464.0 1044.8ZM425.6 1049.5 L435.0 1047.5 L443.8 1045.5 L447.1 1047.5 L440.4 1050.2 L432.3 1052.2 L426.3 1050.9ZM451.2 1044.1 L459.3 1045.5 L470.7 1050.9 L467.3 1052.9 L458.6 1052.2 L452.5 1047.5ZM414.1 1057.6 L420.2 1053.6 L427.6 1054.2 L422.2 1058.3 L415.5 1059.0ZM420.2 1059.0 L426.9 1056.3 L437.7 1056.3 L437.7 1061.6 L431.6 1063.7 L423.6 1063.7 L420.9 1061.6ZM441.8 1055.6 L448.5 1054.2 L447.1 1059.0 L443.1 1058.3ZM455.9 1056.9 L464.0 1054.2 L471.4 1056.9 L475.4 1060.3 L479.5 1065.0 L483.5 1067.7 L479.5 1070.4 L477.4 1074.4 L472.7 1073.8 L468.7 1069.1 L464.0 1066.4 L458.6 1063.0 L455.2 1060.3ZM447.1 1060.3 L451.2 1059.0 L453.9 1063.7 L451.2 1067.7 L447.1 1066.4ZM451.9 1071.1 L456.6 1071.8 L455.9 1074.4 L451.9 1073.8Z" fill="#9bbde6" stroke="#fff" stroke-width="0.5"/><path d="M381.1 1102.2 L384.2 1101.0 L424.6 1101.0 L425.5 1100.3 L432.0 1102.9 L438.4 1105.8 L440.7 1108.1 L438.9 1113.2 L444.3 1112.8 L448.1 1111.3 L451.5 1108.7 L456.7 1108.7 L459.0 1105.8 L461.5 1104.1 L463.3 1104.8 L462.6 1107.3 L463.3 1109.0 L457.9 1111.3 L456.4 1114.7 L450.8 1117.0 L448.5 1120.2 L445.9 1123.9 L445.9 1127.3 L439.8 1130.3 L436.0 1133.4 L434.6 1136.6 L435.6 1143.2 L433.7 1146.5 L432.6 1143.8 L431.5 1141.0 L429.9 1137.2 L426.6 1136.4 L422.6 1136.8 L421.5 1139.1 L418.4 1138.1 L414.5 1137.7 L412.1 1139.3 L408.6 1141.5 L407.8 1145.0 L404.8 1141.9 L402.9 1137.5 L400.0 1139.1 L397.8 1137.2 L395.9 1133.7 L393.2 1133.7 L392.9 1134.7 L388.5 1134.7 L383.3 1132.4 L379.7 1132.4 L378.4 1129.6 L375.6 1128.4 L374.9 1122.3 L374.1 1117.4 L376.0 1112.8 L379.9 1106.4ZM389.2 1062.1 L372.7 1060.1 L364.6 1061.8 L356.6 1064.5 L359.3 1068.2 L353.2 1069.2 L348.5 1070.9 L353.9 1071.5 L351.2 1073.6 L343.1 1076.9 L341.8 1079.6 L344.4 1082.3 L349.8 1083.0 L357.2 1080.3 L362.6 1078.3 L367.3 1079.0 L372.7 1080.3 L376.8 1083.7 L380.8 1090.4 L382.2 1089.1 L379.5 1081.6 L373.4 1079.6ZM311.0 1155.2 L311.9 1158.1 L312.4 1157.1 L311.2 1155.6Z" fill="#0656f0" stroke="#fff" stroke-width="0.5"/><path d="M560.2 1111.7 L567.7 1113.6 L567.7 1114.5 L566.2 1115.5 L564.1 1116.3 L562.5 1119.1 L563.2 1120.6 L562.2 1121.4 L559.7 1124.4 L556.1 1124.4 L554.3 1125.8 L553.2 1124.2 L551.5 1123.5 L551.4 1122.0 L552.2 1120.1 L552.3 1117.8 L552.6 1116.3 L550.6 1114.5 L549.7 1114.4 L549.0 1112.5 L551.0 1111.1 L554.2 1111.3ZM574.1 1110.9 L576.2 1109.8 L578.2 1110.7 L578.7 1112.6 L581.6 1114.9 L584.6 1116.6 L586.9 1118.2 L586.8 1122.0 L588.3 1121.2 L589.0 1119.3 L591.0 1118.0 L587.0 1114.5 L583.3 1111.5 L581.6 1110.2 L581.1 1107.9 L583.3 1107.3 L583.1 1105.8 L580.6 1104.8 L578.4 1105.2 L576.2 1106.7 L573.3 1106.9 L572.9 1108.7ZM581.9 1122.0 L586.8 1121.4 L586.2 1124.4 L582.0 1122.7ZM575.6 1116.3 L577.7 1116.1 L577.6 1119.9 L575.7 1120.1ZM567.8 1096.5 L569.3 1094.8 L569.7 1093.4 L572.7 1092.5 L572.9 1095.0 L571.8 1095.5 L571.4 1097.2 L569.4 1096.7Z" fill="#9bbde6" stroke="#fff" stroke-width="0.5"/><path d="M571.4 1097.2 L571.8 1095.5 L572.9 1095.0 L572.8 1092.5 L575.0 1091.7 L575.1 1089.8 L576.9 1090.4 L578.4 1091.5 L581.9 1090.8 L583.1 1091.7 L583.7 1094.2 L584.5 1097.2 L580.4 1098.6 L583.0 1101.4 L582.0 1103.9 L578.3 1103.9 L574.1 1103.7 L574.8 1101.0 L572.2 1100.1 L571.7 1099.0ZM774.4 1115.3 L776.5 1115.7 L778.9 1114.4 L780.8 1111.9 L777.7 1110.4 L773.1 1107.9 L774.6 1111.5 L773.5 1113.0ZM776.8 1115.7 L779.3 1119.1 L778.9 1121.4 L780.3 1124.8 L780.8 1126.3 L779.9 1127.8 L778.6 1128.4 L775.8 1128.4 L775.0 1130.5 L772.6 1128.4 L769.8 1129.0 L766.9 1129.6 L767.1 1128.2 L768.9 1126.7 L773.3 1126.3 L773.3 1123.3 L776.2 1122.1 L776.0 1118.5 L775.1 1116.6ZM766.8 1129.7 L769.0 1131.5 L769.1 1134.5 L767.7 1135.3 L765.5 1131.5ZM768.6 1129.9 L772.5 1129.2 L772.5 1130.9 L770.8 1131.8Z" fill="#5a9de9" stroke="#fff" stroke-width="0.5"/><path d="M560.3 1127.5 L561.0 1133.2 L557.3 1134.1 L549.1 1139.6 L549.1 1142.3M549.1 1142.3 L549.0 1145.0 L543.8 1144.8 L543.6 1153.7 L535.5 1153.7M549.1 1142.3 L555.2 1146.7 L553.3 1146.9 L554.8 1162.8 L544.2 1164.7 L543.0 1166.4 L536.1 1163.6M576.0 1124.0 L577.9 1136.8 L578.9 1146.7 L582.0 1149.5M602.2 1134.1 L603.2 1152.4 L622.3 1152.4M582.0 1149.5 L587.0 1150.5 L601.8 1157.1 L603.3 1156.2 L603.2 1152.4M555.2 1146.7 L569.7 1157.9 L569.7 1162.2 L563.6 1165.9 L558.0 1168.5 L553.9 1174.4 L549.8 1175.2 L544.9 1171.4M569.7 1157.9 L572.3 1157.3 L582.0 1149.5M587.0 1150.5 L587.9 1154.6 L585.1 1167.6M601.8 1157.1 L598.8 1165.7 L601.5 1177.1 L599.0 1173.3M568.8 1171.9 L585.1 1168.3M585.1 1168.3 L582.6 1180.9 L576.9 1185.6M567.4 1182.2 L568.8 1171.9M601.5 1177.1 L618.7 1176.1M586.8 1184.7 L608.0 1184.7 L612.3 1187.5M583.2 1205.6 L592.6 1200.8 L589.3 1190.4 L593.4 1187.5M583.2 1205.6 L590.0 1208.4 L598.3 1207.5 L602.2 1215.1 L598.9 1218.9 L598.6 1227.4M582.1 1227.1 L597.0 1228.4 L603.5 1228.0M589.1 1248.5 L594.6 1248.2 L594.9 1241.3 L595.9 1236.0 L597.0 1228.4M594.9 1241.3 L604.5 1240.7 L610.2 1236.4 L614.4 1236.6M614.4 1236.6 L616.6 1226.5 L612.4 1223.8 L616.8 1220.8 L620.2 1216.0 L629.3 1214.1M603.5 1228.0 L612.4 1223.8M627.9 1203.1 L618.9 1196.1 L611.5 1197.0 L614.0 1190.0 L612.3 1187.5M631.3 1197.6 L630.4 1186.6 L620.5 1185.6 L618.7 1176.1 L622.5 1167.0 L627.3 1164.5M630.4 1186.6 L641.8 1179.0 L635.1 1177.1 L633.3 1172.3M598.9 1218.9 L612.2 1210.3 L610.4 1217.0 L616.8 1220.8M610.4 1217.0 L611.5 1197.0M579.1 1190.4 L589.3 1190.4M558.0 1184.7 L558.0 1173.3M562.9 1182.8 L562.9 1173.3M549.8 1185.6 L549.8 1175.2M544.0 1180.9 L544.9 1175.2M611.5 1197.0 L613.1 1201.8 L611.4 1205.6 L612.2 1210.3M565.2 1097.4 L566.5 1097.1 L569.0 1099.3 L571.5 1100.1 L571.7 1099.0M574.1 1103.7 L572.8 1106.9 L572.9 1108.7 L574.1 1110.9M574.1 1103.7 L576.9 1104.3 L578.4 1105.2M596.0 1091.2 L596.7 1096.3 L597.5 1098.2 L595.6 1101.0M584.5 1097.2 L587.4 1098.6 L590.2 1100.1 L595.6 1101.0M582.0 1103.9 L587.8 1102.9 L596.4 1102.9M587.7 1101.6 L587.8 1102.9M595.8 1102.9 L601.7 1102.6 L604.7 1107.7 L607.0 1108.1M596.8 1110.2 L605.7 1111.1M583.1 1105.8 L587.2 1105.8 L591.0 1106.7 L593.9 1106.4 L596.8 1110.2M591.0 1106.7 L591.7 1108.8 L591.6 1111.5 L593.5 1114.4M593.8 1118.2 L597.0 1115.9 L603.1 1115.7 L605.1 1114.4M593.5 1114.4 L596.8 1113.8 L596.8 1110.2M592.0 1087.6 L599.9 1088.3 L602.0 1087.6M596.2 1084.3 L600.7 1084.9M596.7 1096.3 L605.9 1096.3 L608.5 1094.8 L614.1 1098.4 L620.8 1099.9 L619.4 1104.5M600.7 1084.9 L604.6 1087.7 L608.3 1093.4 L608.5 1094.8M597.2 1062.1 L600.5 1065.9 L601.2 1072.5 L603.6 1074.8 L600.4 1079.2M579.2 1082.0 L579.5 1077.3 L581.5 1069.7 L585.2 1064.0 L588.2 1063.0M593.7 1069.1 L592.2 1064.9 L588.3 1062.8M588.7 1062.5 L594.7 1061.5 L597.8 1061.3 L597.2 1062.1M633.2 1107.5 L634.7 1097.2 L650.5 1097.2 L659.2 1089.1 L669.9 1091.5 L677.8 1097.2 L689.3 1101.0M642.8 1114.4 L647.6 1115.7 L653.7 1109.6 L665.9 1116.3 L669.7 1113.4 L682.9 1112.5 L683.5 1114.4 L677.0 1118.2 L674.9 1119.1 L678.4 1123.9M689.3 1101.0 L702.7 1095.3 L715.7 1098.6 L730.5 1099.1 L739.2 1104.8 L729.2 1108.7 L722.7 1114.4 L706.9 1112.5 L697.7 1107.7 L689.3 1101.0M730.5 1099.1 L732.6 1092.9 L747.3 1099.5 L759.4 1102.4 L757.5 1108.7 L759.1 1113.4M678.4 1123.9 L683.9 1127.7 L687.3 1132.4 L690.6 1136.8 L702.6 1141.2 L709.0 1141.3 L716.7 1140.6M678.4 1123.9 L678.1 1129.6 L680.1 1135.3 L675.7 1141.9 L674.9 1146.7 L672.8 1149.1M676.8 1123.9 L672.4 1124.8 L671.9 1129.6 L671.3 1134.3 L667.9 1137.5 L659.2 1137.5 L661.4 1146.3M659.2 1137.5 L658.7 1134.3 L657.4 1128.8 L657.0 1124.8 L650.3 1122.0 L645.8 1123.3M657.0 1124.8 L662.8 1122.9 L672.0 1122.9 L678.1 1123.5M638.6 1137.2 L637.1 1131.5 L634.3 1127.7 L631.8 1123.5 L630.0 1119.1 L631.1 1118.7M618.4 1124.6 L627.6 1123.7 L631.8 1123.5M625.6 1115.3 L628.8 1116.3 L631.1 1118.7 L634.0 1120.2 L636.4 1121.2M622.3 1111.3 L627.5 1113.0 L633.2 1115.3 L636.2 1114.7M638.7 1138.1 L633.3 1138.7 L629.0 1135.3 L624.1 1133.4 L621.0 1134.3 L618.2 1138.1M632.8 1162.2 L639.3 1162.1 L647.1 1158.1 L652.6 1152.4 L651.7 1151.0 L645.6 1148.0M647.1 1158.1 L649.1 1162.6M627.6 1123.7 L626.7 1128.8 L624.0 1132.8M716.7 1140.6 L720.4 1146.7 L725.7 1153.3 L727.0 1151.6 L731.6 1150.5 L734.6 1151.8 L737.0 1153.3M712.2 1154.3 L712.0 1151.4 L714.0 1146.3 L716.7 1140.6M704.6 1152.4 L704.5 1144.2 L710.0 1146.7 L711.9 1154.3M725.7 1153.3 L724.4 1155.2 L721.8 1159.0 L723.1 1162.8 L725.2 1174.2M725.7 1153.3 L726.8 1160.0 L731.7 1160.3 L735.0 1166.6 L731.1 1167.6 L730.6 1170.8M727.0 1151.6 L732.2 1158.1 L737.4 1165.7 L738.8 1170.8 L736.6 1173.3M727.5 1181.8 L730.8 1182.4M754.1 1122.0 L759.2 1120.8M752.2 1118.2 L758.4 1113.4M412.5 1166.6 L415.2 1160.3 L418.3 1160.3 L419.8 1159.0M418.1 1160.3 L417.7 1164.0M416.7 1168.5 L418.8 1164.1M419.7 1169.5 L424.2 1166.6 L427.1 1165.7M422.5 1172.9 L425.8 1173.3M425.7 1177.8 L427.1 1175.9M444.2 1172.9 L443.9 1180.1 L451.9 1182.4 L451.2 1190.4 L452.7 1191.9M433.1 1190.8 L438.5 1194.2 L438.9 1194.6 L442.7 1200.8 L447.7 1202.4 L447.6 1194.6 L448.4 1191.9 L451.2 1190.4M430.7 1200.6 L433.7 1202.7 L438.9 1194.6M464.4 1178.2 L461.8 1183.2 L463.0 1184.3 L457.6 1186.6 L456.7 1191.9 L452.7 1191.9M463.0 1184.3 L464.9 1191.3 L470.7 1190.4 L474.0 1189.8 L478.0 1186.2M469.2 1182.8 L467.4 1191.3M474.1 1183.3 L474.0 1189.8M447.7 1202.4 L442.6 1207.5 L444.0 1212.2 L447.4 1215.1 L449.9 1216.0 L455.8 1212.8 L461.5 1217.9 L464.6 1219.8 L468.2 1225.2 L469.1 1232.2M449.9 1216.0 L449.7 1223.6 L449.1 1229.2M450.1 1227.4 L453.3 1235.0 L455.3 1237.9M455.3 1237.9 L453.9 1245.5 L453.7 1257.9 L454.0 1266.4 L455.2 1274.0 L457.1 1283.5 L457.5 1289.2 L463.3 1293.6 L465.5 1293.6M455.3 1237.9 L461.8 1236.0 L469.1 1232.2 L470.9 1242.6 L475.7 1242.8 L477.4 1245.9 L472.1 1251.6 L471.8 1257.9M461.8 1236.0 L465.8 1231.2 L469.1 1232.2M469.1 1232.2 L473.7 1236.9 L475.7 1242.8M472.1 1251.6 L479.5 1258.2M434.9 1180.5 L436.1 1179.2" fill="none" stroke="#fff" stroke-width="0.6" stroke-linejoin="round"/><path d="M349.8 1083.7 L340 1087 L330 1090.5 L320 1093.5 L309.4 1096.5" fill="none" stroke="#0656f0" stroke-width="0.5" stroke-opacity="0.45" stroke-dasharray="2 1.5"/></svg>
<div style="position:absolute;left:1450px;top:1201px;width:34px;height:41px;background:#fff;border:1px solid #e1e5ee;border-right:none;border-radius:5px 0 0 5px;box-shadow:-4px 0 22px rgba(20,30,60,0.07)"></div>
<svg style="position:absolute;left:1461.5px;top:1213.5px;" width="15" height="15" viewBox="0 0 15 15"><circle cx="7.5" cy="7.5" r="6.5" fill="none" stroke="#2f62ee" stroke-width="1.3"/><path d="M5.5 5.8 a2 2 0 1 1 3 1.7 c-0.7 0.4 -1 0.8 -1 1.6" fill="none" stroke="#2f62ee" stroke-width="1.3"/><circle cx="7.5" cy="11" r="0.8" fill="#2f62ee"/></svg><svg style="position:absolute;left:0;top:0" width="1485" height="1365" font-family="Liberation Sans"><text x="36.80" y="83.20" font-size="13.3" fill="#1b2a4e" text-anchor="start">Select service</text><text x="6.80" y="128.00" font-size="16.6" fill="#14234b" text-anchor="start" font-weight="bold">Content Delivery</text><text x="6.80" y="153.20" font-size="16.6" fill="#14234b" text-anchor="start" font-weight="bold">Network</text><text x="84.80" y="150.40" font-size="11" fill="#ffffff" text-anchor="start">Preview</text><text x="20.40" y="195.50" font-size="14.2" fill="#6b7588" text-anchor="middle">C</text><text x="42.80" y="185.80" font-size="12.6" fill="#1b2a4e" text-anchor="start" textLength="100" lengthAdjust="spacingAndGlyphs">cdn-test-sharath</text><text x="42.80" y="202.80" font-size="11" fill="#6f7a8c" text-anchor="start">Namespace</text><text x="33.60" y="252.00" font-size="14.3" fill="#1b2a4e" text-anchor="start" font-weight="bold">Monitoring</text><text x="33.60" y="286.10" font-size="13.25" fill="#3d6bf0" text-anchor="start">Performance</text><text x="33.60" y="340.70" font-size="14.6" fill="#1b2a4e" text-anchor="start" font-weight="bold">Manage</text><text x="33.60" y="375.80" font-size="13.5" fill="#1b2a4e" text-anchor="start">Distributions</text><text x="33.60" y="403.80" font-size="13.33" fill="#1b2a4e" text-anchor="start">Alerts Management</text><text x="33.60" y="458.70" font-size="14.3" fill="#1b2a4e" text-anchor="start" font-weight="bold">Notifications</text><text x="33.60" y="474.90" font-size="11.5" fill="#a1a9b8" text-anchor="start">Alerts, Audit Logs</text><text x="33.60" y="524.70" font-size="14.3" fill="#1b2a4e" text-anchor="start" font-weight="bold">Service Info</text><text x="33.60" y="540.80" font-size="11.46" fill="#a1a9b8" text-anchor="start">About</text><text x="255.00" y="17.70" font-size="11.7" fill="#667185" text-anchor="start" textLength="29.5" lengthAdjust="spacingAndGlyphs">Home</text><text x="306.60" y="17.70" font-size="11.7" fill="#667185" text-anchor="start" textLength="131.3" lengthAdjust="spacingAndGlyphs">Content Delivery Network</text><text x="459.70" y="17.70" font-size="11.7" fill="#667185" text-anchor="start" textLength="86.8" lengthAdjust="spacingAndGlyphs">cdn-test-sharath</text><text x="568.40" y="17.70" font-size="11.7" fill="#667185" text-anchor="start" textLength="54.3" lengthAdjust="spacingAndGlyphs">Monitoring</text><text x="644.60" y="17.70" font-size="11.7" fill="#667185" text-anchor="start" textLength="65.3" lengthAdjust="spacingAndGlyphs">Performance</text><text x="255.00" y="41.75" font-size="16.6" fill="#1b2a4e" text-anchor="start" textLength="225.6" lengthAdjust="spacingAndGlyphs">CDN Distribution: tls-ng-site2</text><text x="1340.50" y="31.30" font-size="13.4" fill="#1b2a4e" text-anchor="start">Support</text><text x="254.70" y="88.90" font-size="12.8" fill="#2f62ee" text-anchor="start" font-weight="bold">Dashboard</text><text x="352.40" y="88.90" font-size="13" fill="#667185" text-anchor="start">Requests</text><text x="1023.80" y="138.20" font-size="13" fill="#1b2a4e" text-anchor="start">Last 1 hour</text><text x="1163.70" y="138.20" font-size="13.4" fill="#1b2a4e" text-anchor="start">Refresh: Updated just now</text><text x="1378.60" y="138.20" font-size="13.3" fill="#1b2a4e" text-anchor="start">Hide Filter</text><text x="290.70" y="185.20" font-size="13.4" fill="#3366e6" text-anchor="start">Add Filter</text><text x="280.90" y="235.10" font-size="17.4" fill="#1c2c54" text-anchor="start">Traffic</text><text x="398.80" y="232.90" font-size="12.9" fill="#3d6bf0" text-anchor="start">Requests</text><text x="482.60" y="232.90" font-size="13.2" fill="#667185" text-anchor="start">Data Transfer</text><text x="591.10" y="232.90" font-size="13.5" fill="#667185" text-anchor="start">Bandwidth</text><text x="280.90" y="269.80" font-size="11" fill="#667185" text-anchor="start">Total Requests: <tspan font-weight="bold" fill="#4a5568">131</tspan></text><text x="420.40" y="269.80" font-size="11" fill="#667185" text-anchor="start">Hits: <tspan font-weight="bold" fill="#4a5568">123</tspan></text><text x="506.70" y="269.80" font-size="11" fill="#667185" text-anchor="start">Misses: <tspan font-weight="bold" fill="#4a5568">8</tspan></text><text x="305.50" y="488.40" font-size="11" fill="#667185" text-anchor="end">0</text><text x="305.50" y="437.20" font-size="11" fill="#667185" text-anchor="end">10</text><text x="305.50" y="386.00" font-size="11" fill="#667185" text-anchor="end">20</text><text x="305.50" y="334.80" font-size="11" fill="#667185" text-anchor="end">30</text><text x="320.20" y="506.00" font-size="11.1" fill="#667185" text-anchor="middle">4:00 PM, Jan 12</text><text x="618.55" y="506.00" font-size="11.1" fill="#667185" text-anchor="middle">4:15 PM, Jan 12</text><text x="916.90" y="506.00" font-size="11.1" fill="#667185" text-anchor="middle">4:30 PM, Jan 12</text><text x="1215.25" y="506.00" font-size="11.1" fill="#667185" text-anchor="middle">4:45 PM, Jan 12</text><text x="280.60" y="580.10" font-size="16.7" fill="#1c2c54" text-anchor="start">Cache Hit Ratio</text><text x="296.50" y="611.50" font-size="11.2" fill="#667185" text-anchor="start">Hits</text><text x="350.60" y="611.50" font-size="11" fill="#667185" text-anchor="start">Misses</text><text x="454.60" y="744.30" font-size="16.5" fill="#222" text-anchor="middle">93.9%</text><text x="681.80" y="580.00" font-size="17" fill="#1c2c54" text-anchor="start">HTTP Status Codes</text><text x="698.50" y="611.50" font-size="11.1" fill="#667185" text-anchor="start">2xx</text><text x="750.90" y="611.50" font-size="11.1" fill="#667185" text-anchor="start">3xx</text><text x="803.60" y="611.50" font-size="11.1" fill="#667185" text-anchor="start">4xx</text><text x="856.00" y="611.50" font-size="11.1" fill="#667185" text-anchor="start">5xx</text><text x="795.50" y="649.70" font-size="11" fill="#667185" text-anchor="middle">85</text><text x="967.00" y="649.70" font-size="11" fill="#667185" text-anchor="middle">43</text><text x="1028.00" y="649.70" font-size="11" fill="#667185" text-anchor="middle">3</text><text x="1084.20" y="580.00" font-size="17" fill="#1c2c54" text-anchor="start">Latency</text><text x="1084.00" y="617.00" font-size="11.1" fill="#1c2c54" text-anchor="start">Misses</text><text x="1434.00" y="617.00" font-size="11" fill="#1c2c54" text-anchor="end">1.7 ms</text><text x="1084.00" y="656.60" font-size="11.1" fill="#1c2c54" text-anchor="start">Hits</text><text x="1434.00" y="656.60" font-size="11" fill="#1c2c54" text-anchor="end">0 ms</text><text x="682.30" y="752.90" font-size="16.7" fill="#1c2c54" text-anchor="start">HTTP Version</text><text x="682.00" y="790.00" font-size="11.1" fill="#1c2c54" text-anchor="start">HTTP/2.0</text><text x="1032.00" y="790.00" font-size="11.1" fill="#1c2c54" text-anchor="end">131</text><text x="682.00" y="830.00" font-size="11.1" fill="#1c2c54" text-anchor="start">HTTP/1.1</text><text x="1032.00" y="830.00" font-size="11.1" fill="#1c2c54" text-anchor="end">0</text><text x="682.00" y="869.10" font-size="11.1" fill="#1c2c54" text-anchor="start">HTTP/1.2</text><text x="1032.00" y="869.10" font-size="11.1" fill="#1c2c54" text-anchor="end">0</text><text x="1084.30" y="752.90" font-size="16.7" fill="#1c2c54" text-anchor="start">TLS Version</text><text x="1084.00" y="790.40" font-size="11.1" fill="#1c2c54" text-anchor="start">TLS 1.3</text><text x="1434.00" y="790.40" font-size="11.1" fill="#1c2c54" text-anchor="end">131</text><text x="1084.00" y="830.00" font-size="11.1" fill="#1c2c54" text-anchor="start">TLS 1.1</text><text x="1434.00" y="830.00" font-size="11.1" fill="#1c2c54" text-anchor="end">0</text><text x="1084.00" y="869.10" font-size="11.1" fill="#1c2c54" text-anchor="start">TLS 1.2</text><text x="1434.00" y="869.10" font-size="11.1" fill="#1c2c54" text-anchor="end">0</text><text x="280.00" y="968.80" font-size="17.15" fill="#1c2c54" text-anchor="start">Client Requests by Country</text><text x="296.30" y="996.00" font-size="10.9" fill="#667185" text-anchor="start">1 - 13</text><text x="358.10" y="996.00" font-size="10.9" fill="#667185" text-anchor="start">14 - 26</text><text x="428.70" y="996.00" font-size="10.9" fill="#667185" text-anchor="start">27 - 39</text><text x="500.50" y="996.00" font-size="10.9" fill="#667185" text-anchor="start">40 - 49</text><text x="928.90" y="1002.10" font-size="12.6" fill="#1c2c54" text-anchor="start" font-weight="bold">Top 5 Countries</text><text x="1007.50" y="1057.50" font-size="11.5" fill="#667185" text-anchor="end">United States</text><text x="1007.50" y="1090.50" font-size="11.5" fill="#667185" text-anchor="end">Germany</text><text x="1007.50" y="1123.50" font-size="11.5" fill="#667185" text-anchor="end">Japan</text><text x="1007.50" y="1156.50" font-size="11.5" fill="#667185" text-anchor="end">Singapore</text><text x="1007.50" y="1189.50" font-size="11.5" fill="#667185" text-anchor="end">Canada</text><text x="1020.60" y="1241.70" font-size="11" fill="#667185" text-anchor="middle">0</text><text x="1088.40" y="1241.70" font-size="11" fill="#667185" text-anchor="middle">10</text><text x="1156.20" y="1241.70" font-size="11" fill="#667185" text-anchor="middle">20</text><text x="1224.00" y="1241.70" font-size="11" fill="#667185" text-anchor="middle">30</text><text x="1291.80" y="1241.70" font-size="11" fill="#667185" text-anchor="middle">40</text></svg></body></html>
